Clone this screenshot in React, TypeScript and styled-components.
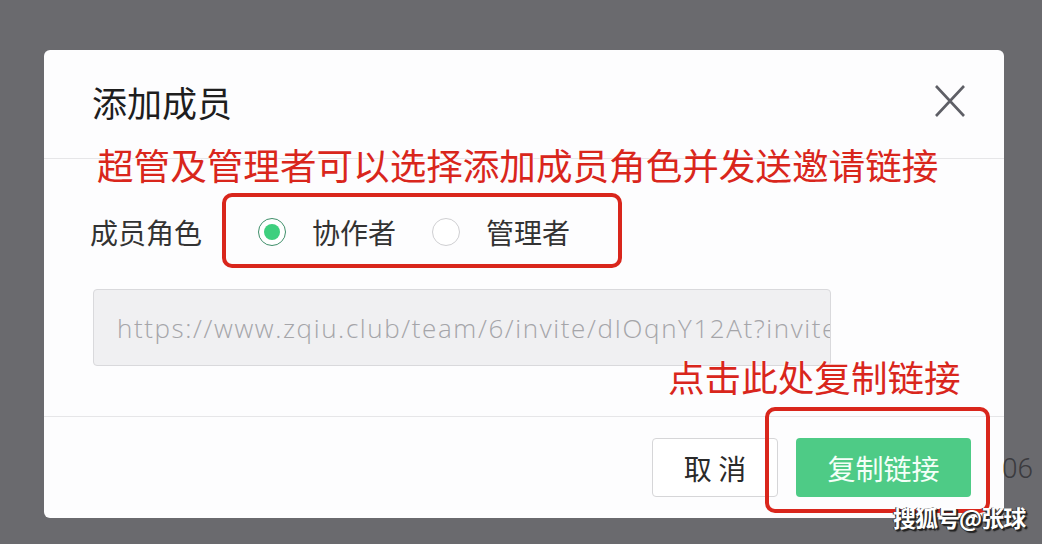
import React, { useState } from 'react';
import styled, { createGlobalStyle } from 'styled-components';

const GlobalStyle = createGlobalStyle`
  html, body {
    margin: 0;
    padding: 0;
    background: #6a6a6e;
  }
  body {
    font-family: "Noto Sans CJK SC", "Noto Sans", sans-serif;
  }
`;

const cjk = `"Noto Sans CJK SC", "Noto Sans", sans-serif`;
const RED = '#d9261c';

const inviteUrl = 'https://www.zqiu.club/team/6/invite/dIOqnY12At?invite=1';

export default function App() {
  const [role, setRole] = useState<'member' | 'admin'>('member');

  return (
    <Page>
      <GlobalStyle />
      <Modal>
        <Header>
          <Title>添加成员</Title>
          <CloseButton aria-label="close">
            <svg width="32" height="34" viewBox="0 0 32 34">
              <path d="M2 2 L30 32 M30 2 L2 32" stroke="#5e5f66" strokeWidth="2.6" fill="none" />
            </svg>
          </CloseButton>
        </Header>

        <Body>
          <RoleRow>
            <Label>成员角色</Label>
            <RadioOption onClick={() => setRole('member')}>
              <RadioCircle checked={role === 'member'} />
              <RadioText>协作者</RadioText>
            </RadioOption>
            <RadioOption onClick={() => setRole('admin')}>
              <RadioCircle checked={role === 'admin'} />
              <RadioText>管理者</RadioText>
            </RadioOption>
          </RoleRow>
          <LinkInput readOnly disabled value={inviteUrl} />
        </Body>

        <Footer>
          <CancelButton>取 消</CancelButton>
          <CopyButton>复制链接</CopyButton>
        </Footer>

        <Note top={97} left={53}>超管及管理者可以选择添加成员角色并发送邀请链接</Note>
        <Note top={309} left={624}>点击此处复制链接</Note>
        <Highlight top={143} left={178} w={400} h={75} />
        <Highlight top={357} left={721} w={225} h={106} />
      </Modal>

      <BehindText>06</BehindText>
      <Watermark>搜狐号@张球</Watermark>
    </Page>
  );
}

const Page = styled.div`
  position: relative;
  width: 1042px;
  height: 544px;
  padding: 50px 0 0 44px;
  box-sizing: border-box;
  overflow: hidden;
`;

const Modal = styled.div`
  position: relative;
  width: 960px;
  height: 468px;
  background: #fdfdfe;
  border-radius: 6px;
  display: flex;
  flex-direction: column;
`;

const Header = styled.div`
  height: 108px;
  display: flex;
  align-items: center;
  justify-content: space-between;
  padding: 0 38px 0 48px;
  border-bottom: 1px solid #e6e6e8;
`;

const Title = styled.div`
  font-family: ${cjk};
  font-size: 35px;
  color: #1e1e1e;
  line-height: 1;
  margin-top: -6px;
`;

const CloseButton = styled.div`
  display: flex;
  margin-top: -6px;
`;

const Body = styled.div`
  flex: 1;
  display: flex;
  flex-direction: column;
  padding: 43px 173px 0 49px;
  border-bottom: 1px solid #e6e6e8;
`;

const RoleRow = styled.div`
  height: 60px;
  display: flex;
  align-items: center;
`;

const Label = styled.div`
  font-family: ${cjk};
  font-size: 28px;
  color: #333;
  margin-left: -3px;
  margin-right: 56px;
`;

const RadioOption = styled.div`
  display: flex;
  align-items: center;
  margin-right: 36px;
  cursor: pointer;
`;

const RadioCircle = styled.span<{ checked: boolean }>`
  width: 28px;
  height: 28px;
  box-sizing: border-box;
  border-radius: 50%;
  border: 1.5px solid ${(p) => (p.checked ? '#3f8f6a' : '#cfcfd2')};
  display: flex;
  align-items: center;
  justify-content: center;
  margin-right: 26px;
  background: #fff;

  &::after {
    content: '';
    width: 16px;
    height: 16px;
    border-radius: 50%;
    background: #3ecf7e;
    display: ${(p) => (p.checked ? 'block' : 'none')};
  }
`;

const RadioText = styled.span`
  font-family: ${cjk};
  font-size: 28px;
  color: #333;
`;

const LinkInput = styled.input`
  margin-top: 27px;
  height: 77px;
  box-sizing: border-box;
  width: 738px;
  padding: 0 0 0 23px;
  background: #f0f0f2;
  border: 1px solid #d9d9dc;
  border-radius: 4px;
  font-family: "Open Sans", Roboto, sans-serif;
  font-weight: 300;
  font-size: 26px;
  letter-spacing: 1.6px;
  color: #a5a5a9;
  -webkit-text-fill-color: #a5a5a9;
  outline: none;
`;

const Footer = styled.div`
  height: 101px;
  display: flex;
  align-items: center;
  justify-content: flex-end;
  gap: 18px;
  padding-right: 33px;
`;

const ButtonBase = styled.button`
  height: 59px;
  border-radius: 4px;
  font-family: ${cjk};
  font-size: 28px;
  cursor: pointer;
  display: flex;
  align-items: center;
  justify-content: center;
  padding: 0;
`;

const CancelButton = styled(ButtonBase)`
  width: 126px;
  background: #fff;
  border: 1px solid #d6d6d8;
  color: #2a2a2a;
`;

const CopyButton = styled(ButtonBase)`
  width: 175px;
  background: #4ecb86;
  border: none;
  color: #f4fff8;
`;

const Note = styled.div<{ top: number; left: number }>`
  position: absolute;
  top: ${(p) => p.top}px;
  left: ${(p) => p.left}px;
  font-family: ${cjk};
  font-size: 36.6px;
  line-height: 1;
  font-weight: 400;
  color: ${RED};
  white-space: nowrap;
  text-shadow: 0 0 2px #fff, 0 0 2px #fff;
`;

const Highlight = styled.div<{ top: number; left: number; w: number; h: number }>`
  position: absolute;
  top: ${(p) => p.top}px;
  left: ${(p) => p.left}px;
  width: ${(p) => p.w}px;
  height: ${(p) => p.h}px;
  box-sizing: border-box;
  border: 4px solid ${RED};
  border-radius: 10px;
  pointer-events: none;
`;

const BehindText = styled.div`
  position: absolute;
  left: 1002px;
  top: 452px;
  font-family: Roboto, "Liberation Sans", sans-serif;
  font-weight: 300;
  font-size: 28px;
  color: #3b3b3f;
`;

const Watermark = styled.div`
  position: absolute;
  left: 893px;
  top: 504px;
  font-family: ${cjk};
  font-size: 23px;
  font-weight: 700;
  line-height: 1.2;
  color: #fff;
  letter-spacing: -1px;
  text-shadow: 1px 1px 0 #222, 2px 2px 1px #222, -1px 0 0 #333;
`;
